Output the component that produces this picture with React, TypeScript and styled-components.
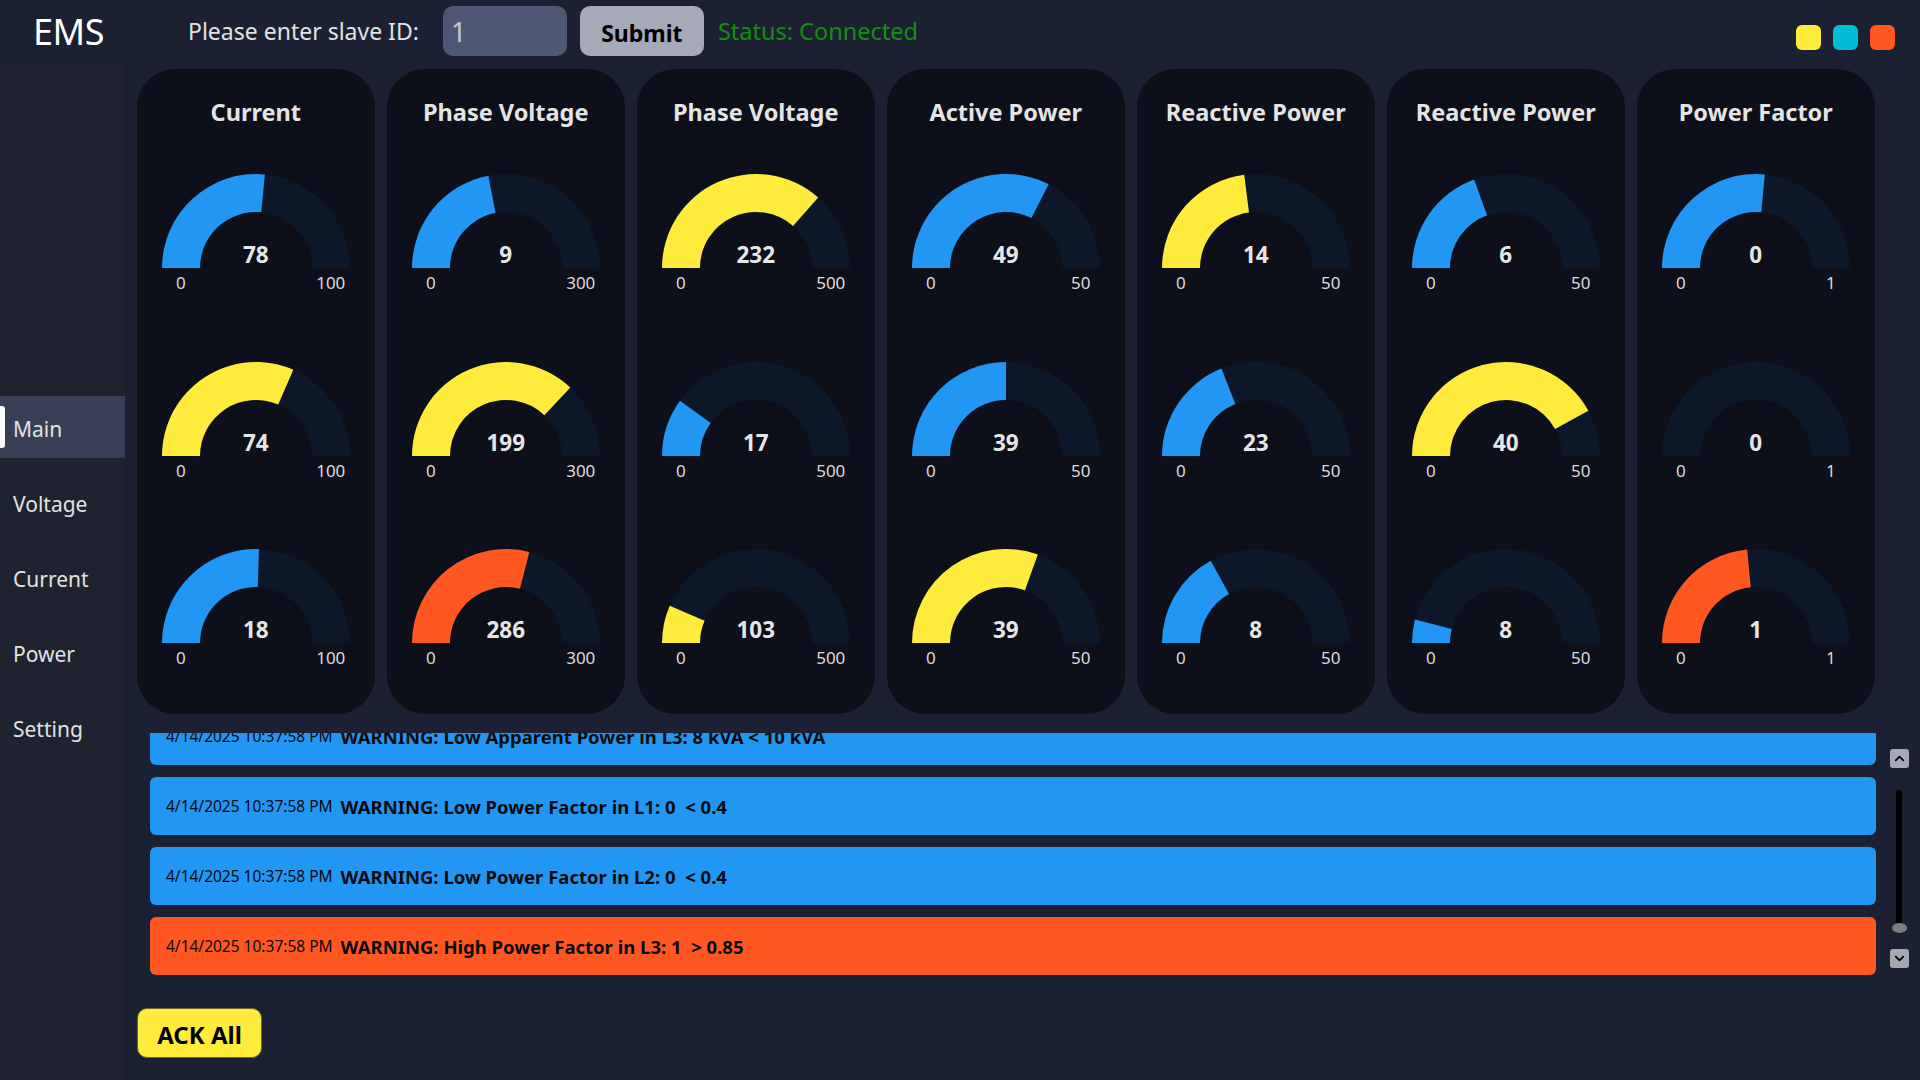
import React, { useLayoutEffect, useRef } from "react";
import styled, { createGlobalStyle } from "styled-components";
import { ChevronUp, ChevronDown } from "lucide-react";

const BLUE = "#2196f3";
const YELLOW = "#ffeb3b";
const ORANGE = "#ff5722";

const GlobalStyle = createGlobalStyle`
  html, body { margin: 0; padding: 0; }
  body {
    background: #1b2033;
    font-family: "Noto Sans", "Open Sans", sans-serif;
    overflow: hidden;
  }
  * { box-sizing: border-box; }
`;

const Page = styled.div`
  width: 1920px;
  height: 1080px;
  display: grid;
  grid-template-rows: 62px 1fr;
  background: #1b2033;
`;

const Header = styled.header`
  display: flex;
  align-items: center;
`;

const Logo = styled.div`
  width: 125px;
  padding-left: 33px;
  font-size: 36px;
  color: #ffffff;
  letter-spacing: -0.5px;
`;

const PromptLabel = styled.label`
  margin-left: 63px;
  font-size: 23px;
  color: #e2e2e2;
`;

const IdInput = styled.div`
  margin-left: 24px;
  width: 124px;
  height: 50px;
  border-radius: 10px;
  background: #4e5874;
  color: #c8ccd6;
  font-size: 27px;
  padding-left: 8px;
  display: flex;
  align-items: center;
`;

const SubmitButton = styled.button`
  margin-left: 13px;
  width: 124px;
  height: 50px;
  border: none;
  border-radius: 10px;
  background: #a5a9b8;
  color: #000;
  font-family: "Noto Sans", sans-serif;
  font-weight: 700;
  font-size: 23px;
  padding: 4px 0 0;
`;

const Status = styled.div`
  margin-left: 14px;
  font-size: 23.5px;
  color: #11900f;
`;

const Dots = styled.div`
  margin-left: auto;
  margin-right: 25px;
  margin-top: 13px;
  display: flex;
  gap: 12px;
`;

const Dot = styled.span<{ $c: string }>`
  width: 25px;
  height: 25px;
  border-radius: 6px;
  background: ${(p) => p.$c};
`;

const Body = styled.div`
  display: flex;
  min-height: 0;
`;

const Sidebar = styled.nav`
  width: 125px;
  background: #1f2330;
  border-top-left-radius: 6px;
  padding-top: 334px;
  display: flex;
  flex-direction: column;
  gap: 13px;
`;

const NavItem = styled.div<{ $active?: boolean }>`
  height: 62px;
  display: flex;
  align-items: center;
  gap: 8px;
  padding-top: 3px;
  background: ${(p) => (p.$active ? "#394056" : "transparent")};
  color: #e2e2e2;
  font-size: 21px;
`;

const NavMark = styled.span<{ $active?: boolean }>`
  width: 5px;
  height: 42px;
  margin-top: -3px;
  border-radius: 0 3px 3px 0;
  background: ${(p) => (p.$active ? "#ffffff" : "transparent")};
`;

const Main = styled.main`
  flex: 1;
  padding: 7px 0 0 12px;
  display: flex;
  flex-direction: column;
`;

const CardRow = styled.div`
  display: flex;
  gap: 12.5px;
`;

const Card = styled.section`
  width: 237.5px;
  height: 645px;
  border-radius: 38px;
  background: #0d0f1a;
  display: flex;
  flex-direction: column;
  align-items: center;
`;

const CardTitle = styled.h2`
  margin: 0;
  height: 86px;
  line-height: 86px;
  font-size: 23.5px;
  font-weight: 700;
  color: #e4e4e4;
`;

const GaugeStack = styled.div`
  margin-top: 19px;
  display: flex;
  flex-direction: column;
  gap: 64.5px;
`;

const GaugeBox = styled.div`
  position: relative;
  width: 188px;
`;

const GaugeSvg = styled.svg`
  display: block;
`;

const GaugeValue = styled.div`
  position: absolute;
  left: 50%;
  top: 66px;
  transform: translateX(-50%);
  font-weight: 700;
  font-size: 22.5px;
  line-height: 30px;
  color: #e6e6e6;
`;

const TickRow = styled.div`
  display: flex;
  justify-content: space-between;
  height: 29px;
`;

const Tick = styled.span`
  width: 38px;
  text-align: center;
  font-size: 17px;
  line-height: 29px;
  color: #dcdcdc;
  white-space: nowrap;
`;

const AlarmSection = styled.div`
  margin-top: 19px;
  margin-left: 13px;
  display: flex;
`;

const AlarmList = styled.div`
  width: 1726px;
  height: 242px;
  overflow: hidden;
  display: flex;
  flex-direction: column;
  gap: 12px;
`;

const AlarmBar = styled.div<{ $c: string }>`
  flex: 0 0 58px;
  border-radius: 6px;
  background: ${(p) => p.$c};
  display: flex;
  align-items: center;
  padding-left: 16px;
  gap: 8px;
  color: #0a0a0a;
  white-space: pre;
`;

const AlarmTime = styled.span`
  font-size: 15.5px;
`;

const AlarmText = styled.span`
  font-size: 18.5px;
  font-weight: 700;
`;

const ScrollCol = styled.div`
  width: 44px;
  padding: 16px 0 0 13.5px;
  display: flex;
  flex-direction: column;
  align-items: flex-start;
`;

const ScrollBtn = styled.div`
  width: 19px;
  height: 19px;
  border-radius: 3px;
  background: #a5a8b5;
  display: flex;
  align-items: center;
  justify-content: center;
  color: #000;
`;

const Track = styled.div`
  margin-top: 22px;
  width: 19px;
  height: 143px;
  display: flex;
  flex-direction: column;
  align-items: center;
`;

const Rail = styled.div`
  flex: 1;
  width: 6px;
  border-radius: 3px;
  background: #000;
`;

const Thumb = styled.div`
  width: 15px;
  height: 10px;
  margin-top: -2px;
  border-radius: 50%;
  background: #7d7d7d;
`;

const DownBtn = styled(ScrollBtn)`
  margin-top: 16px;
`;

const AckButton = styled.button`
  margin-top: 33px;
  width: 125px;
  height: 50px;
  border-radius: 10px;
  border: 1px solid #6b6630;
  background: ${YELLOW};
  color: #000;
  font-family: "Noto Sans", sans-serif;
  font-weight: 700;
  font-size: 24px;
  padding: 2px 0 0;
`;

type G = { v: string; min: string; max: string; f: number; c: string };

const R = 94;
const r = 56;
const CX = 94;
const CY = 94;

function pt(rad: number, t: number) {
  const a = Math.PI * (1 - t);
  return [CX + rad * Math.cos(a), CY - rad * Math.sin(a)];
}

function sector(t0: number, t1: number) {
  const [x0, y0] = pt(R, t0);
  const [x1, y1] = pt(R, t1);
  const [x2, y2] = pt(r, t1);
  const [x3, y3] = pt(r, t0);
  return `M${x0} ${y0} A${R} ${R} 0 0 1 ${x1} ${y1} L${x2} ${y2} A${r} ${r} 0 0 0 ${x3} ${y3} Z`;
}

function Gauge({ g }: { g: G }) {
  return (
    <GaugeBox>
      <GaugeSvg width={188} height={94} viewBox="0 0 188 94">
        <path d={sector(0, 1)} fill="#0c1729" />
        {g.f > 0 && <path d={sector(0, g.f)} fill={g.c} />}
      </GaugeSvg>
      <GaugeValue>{g.v}</GaugeValue>
      <TickRow>
        <Tick>{g.min}</Tick>
        <Tick>{g.max}</Tick>
      </TickRow>
    </GaugeBox>
  );
}

const cards: { title: string; gauges: G[] }[] = [
  {
    title: "Current",
    gauges: [
      { v: "78", min: "0", max: "100", f: 0.53, c: BLUE },
      { v: "74", min: "0", max: "100", f: 0.63, c: YELLOW },
      { v: "18", min: "0", max: "100", f: 0.51, c: BLUE },
    ],
  },
  {
    title: "Phase Voltage",
    gauges: [
      { v: "9", min: "0", max: "300", f: 0.44, c: BLUE },
      { v: "199", min: "0", max: "300", f: 0.74, c: YELLOW },
      { v: "286", min: "0", max: "300", f: 0.58, c: ORANGE },
    ],
  },
  {
    title: "Phase Voltage",
    gauges: [
      { v: "232", min: "0", max: "500", f: 0.73, c: YELLOW },
      { v: "17", min: "0", max: "500", f: 0.2, c: BLUE },
      { v: "103", min: "0", max: "500", f: 0.13, c: YELLOW },
    ],
  },
  {
    title: "Active Power",
    gauges: [
      { v: "49", min: "0", max: "50", f: 0.65, c: BLUE },
      { v: "39", min: "0", max: "50", f: 0.5, c: BLUE },
      { v: "39", min: "0", max: "50", f: 0.61, c: YELLOW },
    ],
  },
  {
    title: "Reactive Power",
    gauges: [
      { v: "14", min: "0", max: "50", f: 0.46, c: YELLOW },
      { v: "23", min: "0", max: "50", f: 0.38, c: BLUE },
      { v: "8", min: "0", max: "50", f: 0.34, c: BLUE },
    ],
  },
  {
    title: "Reactive Power",
    gauges: [
      { v: "6", min: "0", max: "50", f: 0.39, c: BLUE },
      { v: "40", min: "0", max: "50", f: 0.84, c: YELLOW },
      { v: "8", min: "0", max: "50", f: 0.08, c: BLUE },
    ],
  },
  {
    title: "Power Factor",
    gauges: [
      { v: "0", min: "0", max: "1", f: 0.53, c: BLUE },
      { v: "0", min: "0", max: "1", f: 0, c: BLUE },
      { v: "1", min: "0", max: "1", f: 0.47, c: ORANGE },
    ],
  },
];

const TS = "4/14/2025 10:37:58 PM";

const alarms: { text: string; c: string }[] = [
  { text: "WARNING: Low Apparent Power in L3: 8 kVA < 10 kVA", c: BLUE },
  { text: "WARNING: Low Power Factor in L1: 0  < 0.4", c: BLUE },
  { text: "WARNING: Low Power Factor in L2: 0  < 0.4", c: BLUE },
  { text: "WARNING: High Power Factor in L3: 1  > 0.85", c: ORANGE },
];

const navItems = ["Main", "Voltage", "Current", "Power", "Setting"];

export default function App() {
  const listRef = useRef<HTMLDivElement>(null);
  useLayoutEffect(() => {
    if (listRef.current) listRef.current.scrollTop = listRef.current.scrollHeight;
  }, []);

  return (
    <>
      <GlobalStyle />
      <Page>
        <Header>
          <Logo>EMS</Logo>
          <PromptLabel>Please enter slave ID:</PromptLabel>
          <IdInput>1</IdInput>
          <SubmitButton>Submit</SubmitButton>
          <Status>Status: Connected</Status>
          <Dots>
            <Dot $c={YELLOW} />
            <Dot $c="#00bcd4" />
            <Dot $c={ORANGE} />
          </Dots>
        </Header>
        <Body>
          <Sidebar>
            {navItems.map((n, i) => (
              <NavItem key={n} $active={i === 0}>
                <NavMark $active={i === 0} />
                {n}
              </NavItem>
            ))}
          </Sidebar>
          <Main>
            <CardRow>
              {cards.map((c, i) => (
                <Card key={i}>
                  <CardTitle>{c.title}</CardTitle>
                  <GaugeStack>
                    {c.gauges.map((g, j) => (
                      <Gauge key={j} g={g} />
                    ))}
                  </GaugeStack>
                </Card>
              ))}
            </CardRow>
            <AlarmSection>
              <AlarmList ref={listRef}>
                {alarms.map((a, i) => (
                  <AlarmBar key={i} $c={a.c}>
                    <AlarmTime>{TS}</AlarmTime>
                    <AlarmText>{a.text}</AlarmText>
                  </AlarmBar>
                ))}
              </AlarmList>
              <ScrollCol>
                <ScrollBtn>
                  <ChevronUp size={15} strokeWidth={3} />
                </ScrollBtn>
                <Track>
                  <Rail />
                  <Thumb />
                </Track>
                <DownBtn>
                  <ChevronDown size={15} strokeWidth={3} />
                </DownBtn>
              </ScrollCol>
            </AlarmSection>
            <AckButton>ACK All</AckButton>
          </Main>
        </Body>
      </Page>
    </>
  );
}
